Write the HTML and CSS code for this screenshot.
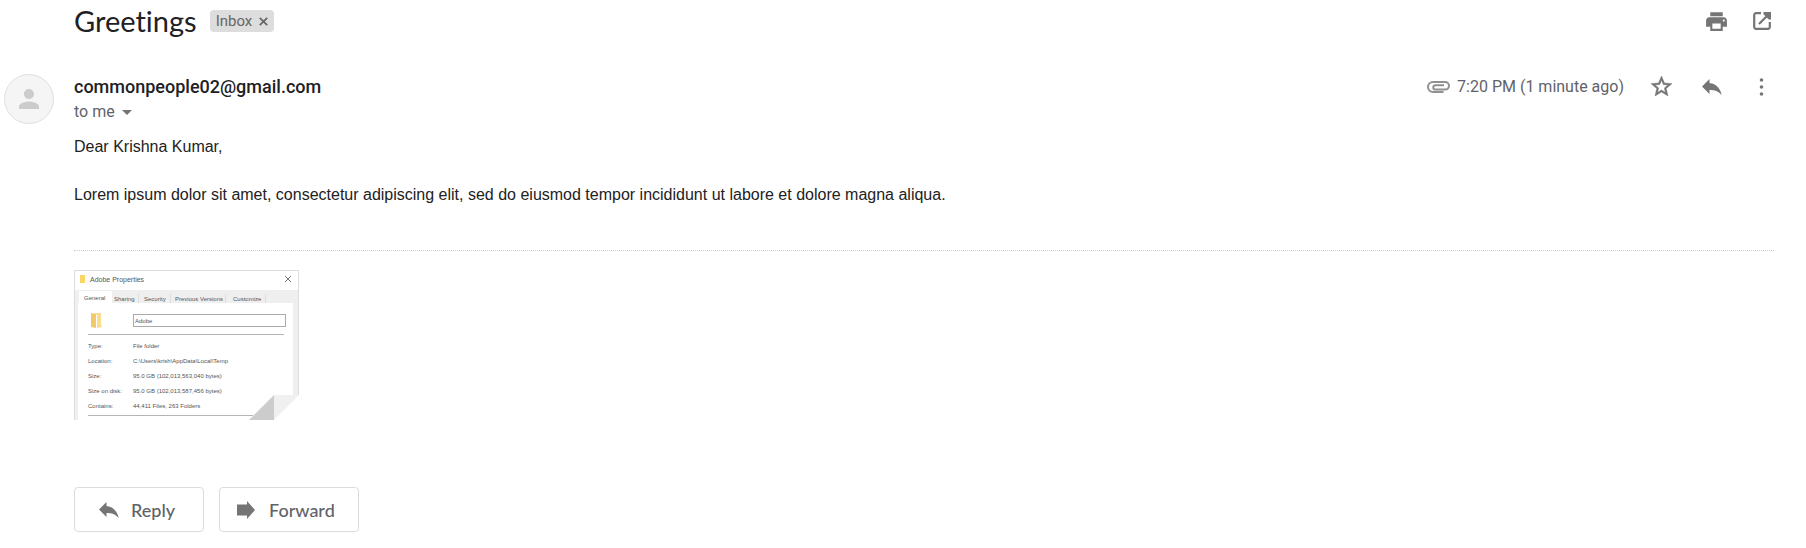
FILE: index.html
```html
<!DOCTYPE html>
<html lang="en">
<head>
<meta charset="utf-8">
<title>Greetings</title>
<meta name="viewport" content="width=device-width, initial-scale=1">
<link rel="stylesheet" href="styles.css">
</head>
<body>
<main class="thread">
  <header class="subject">
    <h1 class="subject-title">Greetings</h1>
    <span class="label">Inbox
      <button class="label-remove" type="button" aria-label="Remove label Inbox"><svg width="9" height="9" viewBox="0 0 8 8"><path d="M.7.7l6.600 6.600M7.300.7L.7 7.300" stroke="#666" stroke-width="1.500"/></svg></button>
    </span>
    <div class="subject-tools">
      <button class="icon-button" type="button" aria-label="Print"><svg width="25" height="25" viewBox="0 0 24 24"><path d="M19 8H5c-1.660 0-3 1.340-3 3v6h4v4h12v-4h4v-6c0-1.660-1.340-3-3-3zm-3 11H8v-5h8v5zm3-7c-.550 0-1-.450-1-1s.450-1 1-1 1 .450 1 1-.450 1-1 1zM18 3H6v4h12V3z"/></svg></button>
      <button class="icon-button" type="button" aria-label="Open in new window"><svg width="18" height="18" viewBox="0 0 18 18"><path d="M8 1.200H3A1.800 1.800 0 0 0 1.200 3v12A1.800 1.800 0 0 0 3 16.800h12a1.800 1.800 0 0 0 1.800-1.800v-5M6 12l9-9" fill="none" stroke="#757575" stroke-width="2.200"/><path d="M10.500 0H18v7.500h-2.200L10.500 2.200z"/></svg></button>
    </div>
  </header>

  <article class="message">
    <div class="avatar"><svg width="30" height="30" viewBox="0 0 24 24"><path d="M12 12c2.210 0 4-1.790 4-4s-1.790-4-4-4-4 1.790-4 4 1.790 4 4 4zm0 2c-2.670 0-8 1.340-8 4v2h16v-2c0-2.660-5.330-4-8-4z" fill="#ccc"/></svg></div>
    <div class="message-main">
      <div class="message-head">
        <div class="sender">
          <h2 class="sender-name">commonpeople02@gmail.com</h2>
          <button class="recipient" type="button">to me <svg width="10" height="5" viewBox="0 0 10 5"><path d="M0 0h10L5 5z"/></svg></button>
        </div>
        <div class="message-meta">
          <svg class="clip" width="23" height="12" viewBox="0 0 23 12"><path d="M16.500 11H6A5 5 0 0 1 6 1h12.200a3.800 3.800 0 0 1 0 7.600H8.500a2.200 2.200 0 0 1 0-4.400h8.500" fill="none" stroke="#909090" stroke-width="2"/></svg>
          <time class="sent">7:20 PM (1 minute ago)</time>
          <div class="message-tools">
            <button class="icon-button" type="button" aria-label="Star"><svg width="25" height="25" viewBox="0 0 24 24"><path stroke="#757575" stroke-width=".5" d="M22 9.240l-7.190-.620L12 2 9.190 8.630 2 9.240l5.460 4.730L5.820 21 12 17.270 18.180 21l-1.630-7.030L22 9.240zM12 15.400l-3.760 2.270 1-4.280-3.320-2.880 4.380-.380L12 6.100l1.710 4.040 4.380.380-3.320 2.880 1 4.280L12 15.400z"/></svg></button>
            <button class="icon-button" type="button" aria-label="Reply to sender"><svg width="20" height="16" viewBox="0 0 20 16"><path d="M7.500 4V0L0 7.500l7.500 7.500v-4c5.300 0 9 1.300 12.200 5C18.500 10 14.500 4.700 7.500 4z"/></svg></button>
            <button class="icon-button" type="button" aria-label="More"><svg width="5" height="18" viewBox="0 0 5 18"><circle cx="2.500" cy="2" r="1.800"/><circle cx="2.500" cy="9" r="1.800"/><circle cx="2.500" cy="16" r="1.800"/></svg></button>
          </div>
        </div>
      </div>

      <div class="message-body">
        <p>Dear Krishna Kumar,</p>
        <p>Lorem ipsum dolor sit amet, consectetur adipiscing elit, sed do eiusmod tempor incididunt ut labore et dolore magna aliqua.</p>
      </div>

      <div class="attachments">
        <a class="attachment" href="#" aria-label="Adobe Properties image">
          <svg class="thumb" width="225" height="150" viewBox="0 0 225 150">
            <rect width="225" height="150" fill="#efefef"/>
            <rect x="1" y="1" width="223" height="19" fill="#fff"/>
            <path d="M6 5h5v8H6z" fill="#fbd667"/>
            <text class="thumb-title" x="16" y="12">Adobe Properties</text>
            <path d="M211 6l6 6m0-6l-6 6" stroke="#777"/>
            <rect x="4" y="33" width="215" height="117" fill="#fff"/>
            <rect x="5" y="21" width="33" height="13" fill="#fff"/>
            <path d="M64.500 24v9m32-9v9m55-9v9m40-9v9" stroke="#ddd"/>
            <text x="10" y="30">General</text>
            <text x="40" y="31">Sharing</text>
            <text x="70" y="31">Security</text>
            <text x="101" y="31">Previous Versions</text>
            <text x="159" y="31">Customize</text>
            <path d="M17 43l5 1v14l-5-1z" fill="#f2c96a"/><path d="M20 43h7v11l1 3-5 1V45z" fill="#fbdd8c"/>
            <rect x="59.500" y="44.500" width="152" height="12" fill="#fff" stroke="#aaa"/>
            <text x="61" y="53">Adobe</text>
            <path d="M14 64.500h196M14 145.500h165" stroke="#b5b5b5"/>
            <text x="14" y="78">Type:</text><text x="59" y="78">File folder</text>
            <text x="14" y="93">Location:</text><text x="59" y="93">C:\Users\krish\AppData\Local\Temp</text>
            <text x="14" y="108">Size:</text><text x="59" y="108">95.0 GB (102,013,563,040 bytes)</text>
            <text x="14" y="123">Size on disk:</text><text x="59" y="123">95.0 GB (102,013,587,456 bytes)</text>
            <text x="14" y="138">Contains:</text><text x="59" y="138">44,411 Files, 263 Folders</text>
            <path d="M225 125v25h-50z" fill="#fff"/>
            <path d="M175 150l25-25v25z" fill="#ccc"/>
            <path d="M200 125h25l-25 25z" fill="#f0f0f0"/>
            <path d="M.5 150V.5h224V125" fill="none" stroke="#ddd"/>
          </svg>
        </a>
      </div>

      <div class="actions">
        <button class="action" type="button"><svg width="20" height="16" viewBox="0 0 20 16"><path d="M7.500 4V0L0 7.500l7.500 7.500v-4c5.300 0 9 1.300 12.200 5C18.500 10 14.500 4.700 7.500 4z"/></svg>Reply</button>
        <button class="action action-forward" type="button"><svg width="18" height="18" viewBox="0 0 18 18"><path d="M0 3.500h10V0l8 9-8 9v-3.500H0z"/></svg>Forward</button>
      </div>
    </div>
  </article>
</main>
</body>
</html>
```
FILE: styles.css
```css
* { box-sizing: border-box; }
body {
  margin: 0;
  background: #fff;
  color: #202124;
  font-family: Roboto, "Liberation Sans", sans-serif;
}
button {
  margin: 0;
  padding: 0;
  border: 0;
  background: none;
  color: inherit;
  font: inherit;
  cursor: pointer;
}
svg { display: block; flex: none; fill: #757575; }
h1, h2, p { margin: 0; }

.thread { padding-right: 32px; }

.subject {
  display: flex;
  align-items: center;
  height: 42px;
  padding-left: 74px;
}
.subject-title {
  font: 400 29px/36px Lato, sans-serif;
  font-variant-ligatures: none;
}
.label {
  display: flex;
  align-items: center;
  gap: 7px;
  height: 22px;
  margin-left: 13px;
  padding: 0 6px;
  border-radius: 4px;
  background: #ddd;
  color: #666;
  font-size: 15px;
}
.subject-tools {
  display: flex;
  gap: 20px;
  margin-left: auto;
}
.icon-button {
  display: grid;
  place-items: center;
  width: 25px;
  height: 25px;
}

.message {
  display: grid;
  grid-template-columns: 70px minmax(0, 1fr);
  padding: 32px 0 0 4px;
}
.avatar {
  display: grid;
  place-items: center;
  width: 50px;
  height: 50px;
  border: 1px solid #e0e0e0;
  border-radius: 50%;
  background: #f5f5f5;
}
.message-head {
  display: flex;
  justify-content: space-between;
  align-items: flex-start;
}
.sender-name {
  font-size: 18px;
  font-weight: 500;
  line-height: 26px;
}
.recipient {
  display: flex;
  align-items: center;
  gap: 7px;
  color: #5f6368;
  font-size: 16px;
  line-height: 24px;
}
.message-meta {
  display: flex;
  align-items: center;
  height: 25px;
}
.sent {
  margin-left: 7px;
  color: #5f6368;
  font-size: 16px;
}
.message-tools {
  display: flex;
  gap: 25px;
  margin-left: 25px;
}
.message-body {
  padding: 11px 0 43px;
  border-bottom: 1px dotted #ccc;
  color: #222;
  font: 16px/24px "Liberation Sans", Arial, sans-serif;
}
.message-body p + p { margin-top: 24px; }

.attachments { padding: 19px 0 67px; }
.attachment { display: inline-block; vertical-align: top; }
.thumb text {
  fill: #555;
  font: 6px "Liberation Sans", Arial, sans-serif;
}
.thumb .thumb-title { font-size: 7px; }

.actions { display: flex; gap: 15px; }
.action {
  display: flex;
  align-items: center;
  gap: 12px;
  height: 45px;
  padding: 0 28px 0 24px;
  border: 1px solid #dadce0;
  border-radius: 4px;
  color: #5f6368;
  font: 500 18px/24px Lato, sans-serif;
}
.action-forward {
  gap: 14px;
  padding: 0 23px 0 17px;
}
```
